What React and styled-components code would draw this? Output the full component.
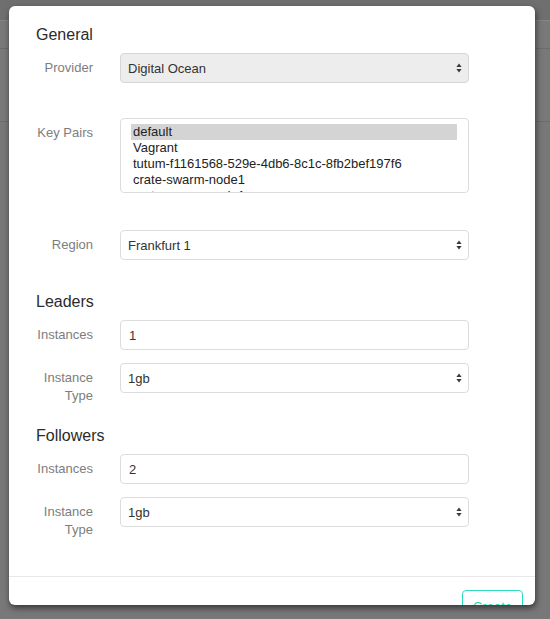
import React from "react";
import styled, { createGlobalStyle } from "styled-components";

const Global = createGlobalStyle`
  html, body { margin: 0; padding: 0; }
  body {
    width: 550px;
    height: 619px;
    overflow: hidden;
    background: #777;
    font-family: "Liberation Sans", Arial, sans-serif;
  }
`;

const Screen = styled.div`
  position: relative;
  width: 550px;
  height: 619px;
  overflow: hidden;
  background: #787878;
`;

const BackPage = styled.div`
  display: flex;
  flex-direction: column;
`;

const BackBand = styled.div`
  height: ${(p) => p.$h}px;
  background: ${(p) => p.$bg};
  border-bottom: 1px solid ${(p) => p.$line};
`;

const Modal = styled.div`
  position: absolute;
  top: 6px;
  left: 9px;
  width: 526px;
  height: 599px;
  background: #fff;
  border-radius: 6px;
  box-shadow: 1px 3px 6px rgba(0, 0, 0, 0.55);
  overflow: hidden;
  display: flex;
  flex-direction: column;
`;

const Body = styled.div`
  flex: 1;
  padding: 20px 66px 0 27px;
`;

const SectionTitle = styled.h4`
  margin: 0 0 9px;
  font-size: 16px;
  line-height: 18px;
  font-weight: 400;
  color: #2b2b2b;
`;

const Row = styled.div`
  display: grid;
  grid-template-columns: 84px 349px;
  align-items: start;
  margin-bottom: ${(p) => p.$mb}px;
`;

const Label = styled.label`
  padding: 6px 27px 0 0;
  text-align: right;
  font-size: 13px;
  line-height: 18px;
  color: #7d7d7d;
`;

const SelectWrap = styled.div`
  position: relative;
`;

const Select = styled.div`
  box-sizing: border-box;
  height: 30px;
  padding: 0 24px 0 7px;
  display: flex;
  align-items: center;
  border: 1px solid ${(p) => (p.$disabled ? "#d6d6d6" : "#dcdcdc")};
  border-radius: 4px;
  background: ${(p) => (p.$disabled ? "#ededed" : "#fff")};
  font-size: 13px;
  color: #333;
`;

const Arrows = styled.svg`
  position: absolute;
  right: 7px;
  top: 10px;
`;

const TextInput = styled.div`
  box-sizing: border-box;
  height: 30px;
  padding: 0 8px;
  display: flex;
  align-items: center;
  border: 1px solid #dcdcdc;
  border-radius: 4px;
  background: #fff;
  font-size: 13px;
  color: #333;
`;

const ListBox = styled.div`
  box-sizing: border-box;
  height: 75px;
  padding: 5px 11px 0 10px;
  border: 1px solid #dcdcdc;
  border-radius: 4px;
  background: #fff;
  overflow: hidden;
`;

const Option = styled.div`
  padding-left: 2px;
  font-size: 13px;
  line-height: 16px;
  color: #222;
  white-space: nowrap;
  background: ${(p) => (p.$selected ? "#d4d4d4" : "transparent")};
`;

const Footer = styled.div`
  box-sizing: border-box;
  height: 29px;
  flex-shrink: 0;
  border-top: 1px solid #e8e8e8;
  padding: 13px 12px 0 0;
  display: flex;
  justify-content: flex-end;
  align-items: flex-start;
`;

const CreateButton = styled.button`
  box-sizing: border-box;
  flex-shrink: 0;
  width: 61px;
  height: 34px;
  border: 1.5px solid #2fdcbc;
  border-radius: 4px;
  background: #fff;
  color: #2fd6b6;
  font-family: "Liberation Sans", Arial, sans-serif;
  font-size: 13px;
  padding: 0;
  line-height: 30px;
`;

const ArrowIcon = () => (
  <Arrows width="6" height="10" viewBox="0 0 6 10">
    <path d="M3 0.5 L5.6 4 L0.4 4 Z" fill="#3a3a3a" />
    <path d="M3 9.5 L5.6 6 L0.4 6 Z" fill="#3a3a3a" />
  </Arrows>
);

const SelectField = ({ value, disabled }) => (
  <SelectWrap>
    <Select $disabled={disabled}>{value}</Select>
    <ArrowIcon />
  </SelectWrap>
);

const keyPairs = [
  "default",
  "Vagrant",
  "tutum-f1161568-529e-4db6-8c1c-8fb2bef197f6",
  "crate-swarm-node1",
  "crate-swarm-node1",
];

export default function App() {
  return (
    <>
      <Global />
      <Screen>
        <BackPage>
          <BackBand $h={20} $bg="#6f6f6f" $line="#858585" />
          <BackBand $h={27} $bg="#797979" $line="#6c6c6c" />
          <BackBand $h={72} $bg="#797979" $line="#6c6c6c" />
        </BackPage>
        <Modal>
          <Body>
            <SectionTitle>General</SectionTitle>
            <Row $mb={35}>
              <Label>Provider</Label>
              <SelectField value="Digital Ocean" disabled />
            </Row>
            <Row $mb={37}>
              <Label>Key Pairs</Label>
              <ListBox>
                {keyPairs.map((k, i) => (
                  <Option key={i} $selected={i === 0}>
                    {k}
                  </Option>
                ))}
              </ListBox>
            </Row>
            <Row $mb={33}>
              <Label>Region</Label>
              <SelectField value="Frankfurt 1" />
            </Row>

            <SectionTitle>Leaders</SectionTitle>
            <Row $mb={13}>
              <Label>Instances</Label>
              <TextInput>1</TextInput>
            </Row>
            <Row $mb={22}>
              <Label>Instance Type</Label>
              <SelectField value="1gb" />
            </Row>

            <SectionTitle>Followers</SectionTitle>
            <Row $mb={13}>
              <Label>Instances</Label>
              <TextInput>2</TextInput>
            </Row>
            <Row $mb={0}>
              <Label>Instance Type</Label>
              <SelectField value="1gb" />
            </Row>
          </Body>
          <Footer>
            <CreateButton>Create</CreateButton>
          </Footer>
        </Modal>
      </Screen>
    </>
  );
}
